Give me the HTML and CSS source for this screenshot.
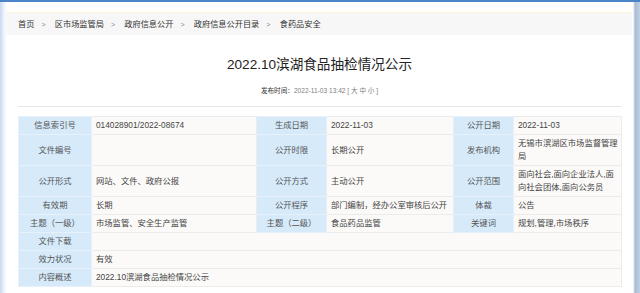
FILE: index.html
```html
<!DOCTYPE html>
<html>
<head>
<meta charset="UTF-8">
<title>2022.10滨湖食品抽检情况公示</title>
<link rel="stylesheet" href="styles.css">
</head>
<body>
	<div class="frame">
		<!-- 위치 -->
		<div class="crumbs">
			<a href="#">首页</a><span class="sep">&gt;</span>
			<a href="#">区市场监管局</a><span class="sep">&gt;</span>
			<a href="#">政府信息公开</a><span class="sep">&gt;</span>
			<a href="#">政府信息公开目录</a><span class="sep">&gt;</span>
			<a href="#">食药品安全</a>
		</div>

		<div class="article">
			<h1 class="title">2022.10滨湖食品抽检情况公示</h1>
			<p class="meta"><b>发布时间：</b>2022-11-03 13:42 [ 大 中 小 ]</p>
			<div class="line"></div>

			<table class="info">
				<colgroup>
					<col class="c1"><col class="c2"><col class="c3"><col class="c4"><col class="c5"><col class="c6">
				</colgroup>
				<tr>
					<th>信息索引号</th><td>014028901/2022-08674</td>
					<th>生成日期</th><td>2022-11-03</td>
					<th>公开日期</th><td>2022-11-03</td>
				</tr>
				<tr>
					<th>文件编号</th><td></td>
					<th>公开时限</th><td>长期公开</td>
					<th>发布机构</th><td>无锡市滨湖区市场监督管理局</td>
				</tr>
				<tr>
					<th>公开形式</th><td>网站、文件、政府公报</td>
					<th>公开方式</th><td>主动公开</td>
					<th>公开范围</th><td>面向社会,面向企业法人,面向社会团体,面向公务员</td>
				</tr>
				<tr>
					<th>有效期</th><td>长期</td>
					<th>公开程序</th><td>部门编制，经办公室审核后公开</td>
					<th>体裁</th><td>公告</td>
				</tr>
				<tr>
					<th>主题（一级）</th><td>市场监管、安全生产监管</td>
					<th>主题（二级）</th><td>食品药品监管</td>
					<th>关键词</th><td>规划,管理,市场秩序</td>
				</tr>
				<tr>
					<th>文件下载</th><td colspan="5"></td>
				</tr>
				<tr>
					<th>效力状况</th><td colspan="5">有效</td>
				</tr>
				<tr>
					<th>内容概述</th><td colspan="5">2022.10滨湖食品抽检情况公示</td>
				</tr>
			</table>
		</div>
	</div>
</body>
</html>
```

FILE: styles.css
```css
html, body {
	margin: 0;
	padding: 0;
}

body {
	width: 640px;
	height: 293px;
	overflow: hidden;
	font-family: "Liberation Sans", "Noto Sans CJK SC", sans-serif;
	color: #333;
}

.frame {
	height: 291px;
	border-top: 2px solid #4c84c8;
	background: linear-gradient(to right, #c9d8f1 0, #eef3fb 4px, #fff 7px, #fff 633px, #a7bbd8 635px, #c3d0e3 640px);
}

/* 위치 표시줄 */
.crumbs {
	margin: 10px 8px 0 6px;
	height: 22px;
	line-height: 23px;
	padding-left: 12px;
	font-size: 8.2px;
	background: #f7f7f7;
	border-top: 1px solid #fdf4dc;
}

.crumbs a {
	color: #333;
	text-decoration: none;
}

.crumbs .sep {
	margin: 0 7px;
	color: #888;
	font-size: 7px;
}

.article {
	padding: 0 19px 0 18px;
}

.title {
	margin: 20px 0 0;
	font-size: 13.6px;
	line-height: 20px;
	font-weight: normal;
	text-align: center;
	color: #222;
}

.meta {
	margin: 11px 0 0;
	font-size: 6.6px;
	line-height: 10px;
	text-align: center;
	color: #808080;
}

.meta b {
	font-weight: normal;
	color: #333;
}

.line {
	margin-top: 10px;
	height: 1px;
	background: #e6e6e6;
}

.info {
	margin-top: 9px;
	width: 603px;
	table-layout: fixed;
	border-collapse: collapse;
	font-size: 8.3px;
	line-height: 13px;
}

.c1 { width: 73px; }
.c2 { width: 165px; }
.c3 { width: 70px; }
.c4 { width: 127px; }
.c5 { width: 60px; }
.c6 { width: 108px; }

.info th,
.info td {
	padding: 2px 2px 2px 4px;
	border: 1px solid #ececec;
}

.info th {
	padding: 2px;
	font-weight: normal;
	text-align: center;
	color: #555;
	background: #d6eafa;
	border-color: #e6f1fb;
}

.info td {
	text-align: left;
	color: #444;
	background: #fbfaf8;
}
```
